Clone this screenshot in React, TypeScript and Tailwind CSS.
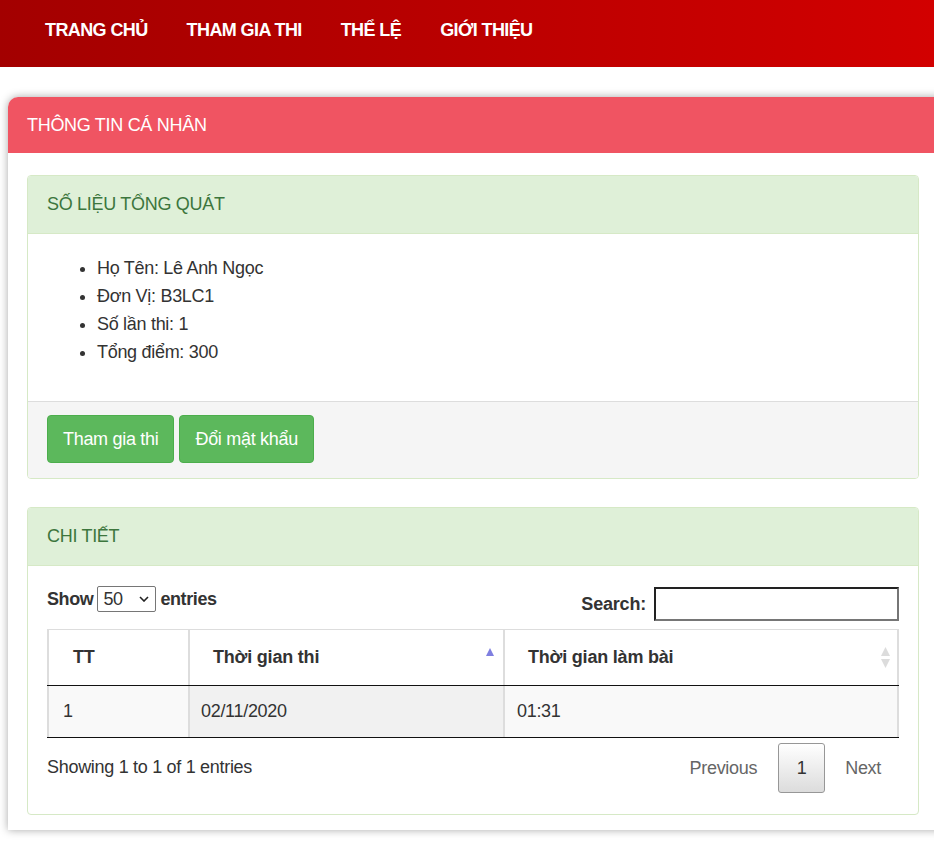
import React from "react";

const font = { fontFamily: '"Liberation Sans", Arial, sans-serif' };

function SortAsc() {
  return (
    <svg width="8" height="8" viewBox="0 0 8 8" className="block">
      <polygon points="4,0 8,8 0,8" fill="#7f7fe0" />
    </svg>
  );
}

function SortBoth() {
  return (
    <svg width="9" height="21" viewBox="0 0 9 21" className="block">
      <polygon points="4.5,0 9,9 0,9" fill="#dcdcdc" />
      <polygon points="0,12 9,12 4.5,21" fill="#dcdcdc" />
    </svg>
  );
}

export default function App() {
  return (
    <div
      className="w-[934px] min-h-[841px] overflow-hidden bg-white text-[#333] text-[18px] tracking-[-0.3px]"
      style={font}
    >
      {/* Nav */}
      <div className="h-[67px] bg-gradient-to-r from-[#a30000] to-[#d20000] flex items-start pl-[45px] pt-[19px] gap-[39px]">
        {["TRANG CHỦ", "THAM GIA THI", "THỂ LỆ", "GIỚI THIỆU"].map((t) => (
          <span key={t} className="text-white font-bold text-[18px] leading-[22px] tracking-[-0.6px]">
            {t}
          </span>
        ))}
      </div>

      {/* Outer panel */}
      <div className="ml-[8px] mt-[30px] w-[940px] rounded-tl-[10px] bg-white shadow-[0_0_9px_rgba(0,0,0,0.35)] mb-[11px]">
        <div className="h-[56px] bg-[#f05462] rounded-tl-[10px] flex items-center pl-[19px] text-white">
          THÔNG TIN CÁ NHÂN
        </div>
        <div className="pl-[19px] pt-[22px] pb-[15px] w-[930px] pr-[19px]">
          {/* Panel 1 */}
          <div className="border border-[#d6e9c6] rounded-[4px] overflow-hidden">
            <div className="h-[58px] bg-[#dff0d8] border-b border-[#d6e9c6] flex items-center pl-[19px] text-[#3c763d]">
              SỐ LIỆU TỔNG QUÁT
            </div>
            <div className="pt-[20px] pb-[35px] bg-white">
              <ul className="list-disc pl-[69px] leading-[28px]">
                <li>Họ Tên: Lê Anh Ngọc</li>
                <li>Đơn Vị: B3LC1</li>
                <li>Số lần thi: 1</li>
                <li>Tổng điểm: 300</li>
              </ul>
            </div>
            <div className="bg-[#f5f5f5] border-t border-[#dddddd] pl-[19px] pt-[13px] pb-[15px] flex gap-[5px]">
              <button className="h-[48px] px-[15px] bg-[#5cb85c] border border-[#4cae4c] rounded-[4px] text-white text-[18px]">
                Tham gia thi
              </button>
              <button className="h-[48px] px-[15px] bg-[#5cb85c] border border-[#4cae4c] rounded-[4px] text-white text-[18px]">
                Đổi mật khẩu
              </button>
            </div>
          </div>

          {/* Panel 2 */}
          <div className="mt-[28px] border border-[#d6e9c6] rounded-[4px] overflow-hidden">
            <div className="h-[58px] bg-[#dff0d8] border-b border-[#d6e9c6] flex items-center pl-[19px] text-[#3c763d]">
              CHI TIẾT
            </div>
            <div className="px-[19px] pt-[20px] pb-[21px]">
              {/* controls */}
              <div className="flex justify-between items-start">
                <div className="flex items-center h-[26px] font-bold gap-[4px] tracking-[-0.4px]">
                  <span>Show</span>
                  <div className="w-[59px] h-[26px] border border-[#767676] rounded-[2px] flex items-center justify-between pl-[5px] pr-[6px] font-normal">
                    <span>50</span>
                    <svg width="10" height="6" viewBox="0 0 10 6">
                      <path d="M1 1 L5 5 L9 1" stroke="#222" strokeWidth="1.6" fill="none" />
                    </svg>
                  </div>
                  <span>entries</span>
                </div>
                <div className="flex items-center h-[34px] gap-[8px] pt-[1px]">
                  <span className="font-bold mt-[2px] tracking-[-0.2px]">Search:</span>
                  <div className="w-[245px] h-[34px] border-2 border-t-[#222] border-l-[#222] border-b-[#767676] border-r-[#767676]" />
                </div>
              </div>

              {/* table */}
              <div className="mt-[9px] border-t border-[#dddddd]">
                <div className="flex h-[56px] border-b border-[#111] font-bold tracking-[-0.2px]">
                  <div className="w-[141px] border-l-2 border-[#dddddd] flex items-center pl-[24px]">TT</div>
                  <div className="w-[315px] border-l-2 border-[#dddddd] flex items-center justify-between pl-[23px] pr-[9px]">
                    <span>Thời gian thi</span>
                    <span className="-mt-[12px]">
                      <SortAsc />
                    </span>
                  </div>
                  <div className="flex-1 border-l-2 border-r-2 border-[#dddddd] flex items-center justify-between pl-[23px] pr-[7px]">
                    <span>Thời gian làm bài</span>
                    <SortBoth />
                  </div>
                </div>
                <div className="flex h-[52px] border-b border-[#111]">
                  <div className="w-[141px] border-l-2 border-[#dddddd] bg-[#f9f9f9] flex items-center pl-[14px]">1</div>
                  <div className="w-[315px] border-l-2 border-[#dddddd] bg-[#f1f1f1] flex items-center pl-[11px]">02/11/2020</div>
                  <div className="flex-1 border-l-2 border-r-2 border-[#dddddd] bg-[#f9f9f9] flex items-center pl-[12px]">01:31</div>
                </div>
              </div>

              {/* footer */}
              <div className="flex justify-between items-start mt-[5px]">
                <div className="pt-[12px] leading-[24px]">Showing 1 to 1 of 1 entries</div>
                <div className="flex items-center pr-[18px]">
                  <span className="text-[#666] pr-[21px]">Previous</span>
                  <div className="w-[47px] h-[50px] border border-[#979797] rounded-[3px] bg-gradient-to-b from-white to-[#dcdcdc] flex items-center justify-center">
                    1
                  </div>
                  <span className="text-[#666] pl-[20px]">Next</span>
                </div>
              </div>
            </div>
          </div>
        </div>
      </div>
    </div>
  );
}
